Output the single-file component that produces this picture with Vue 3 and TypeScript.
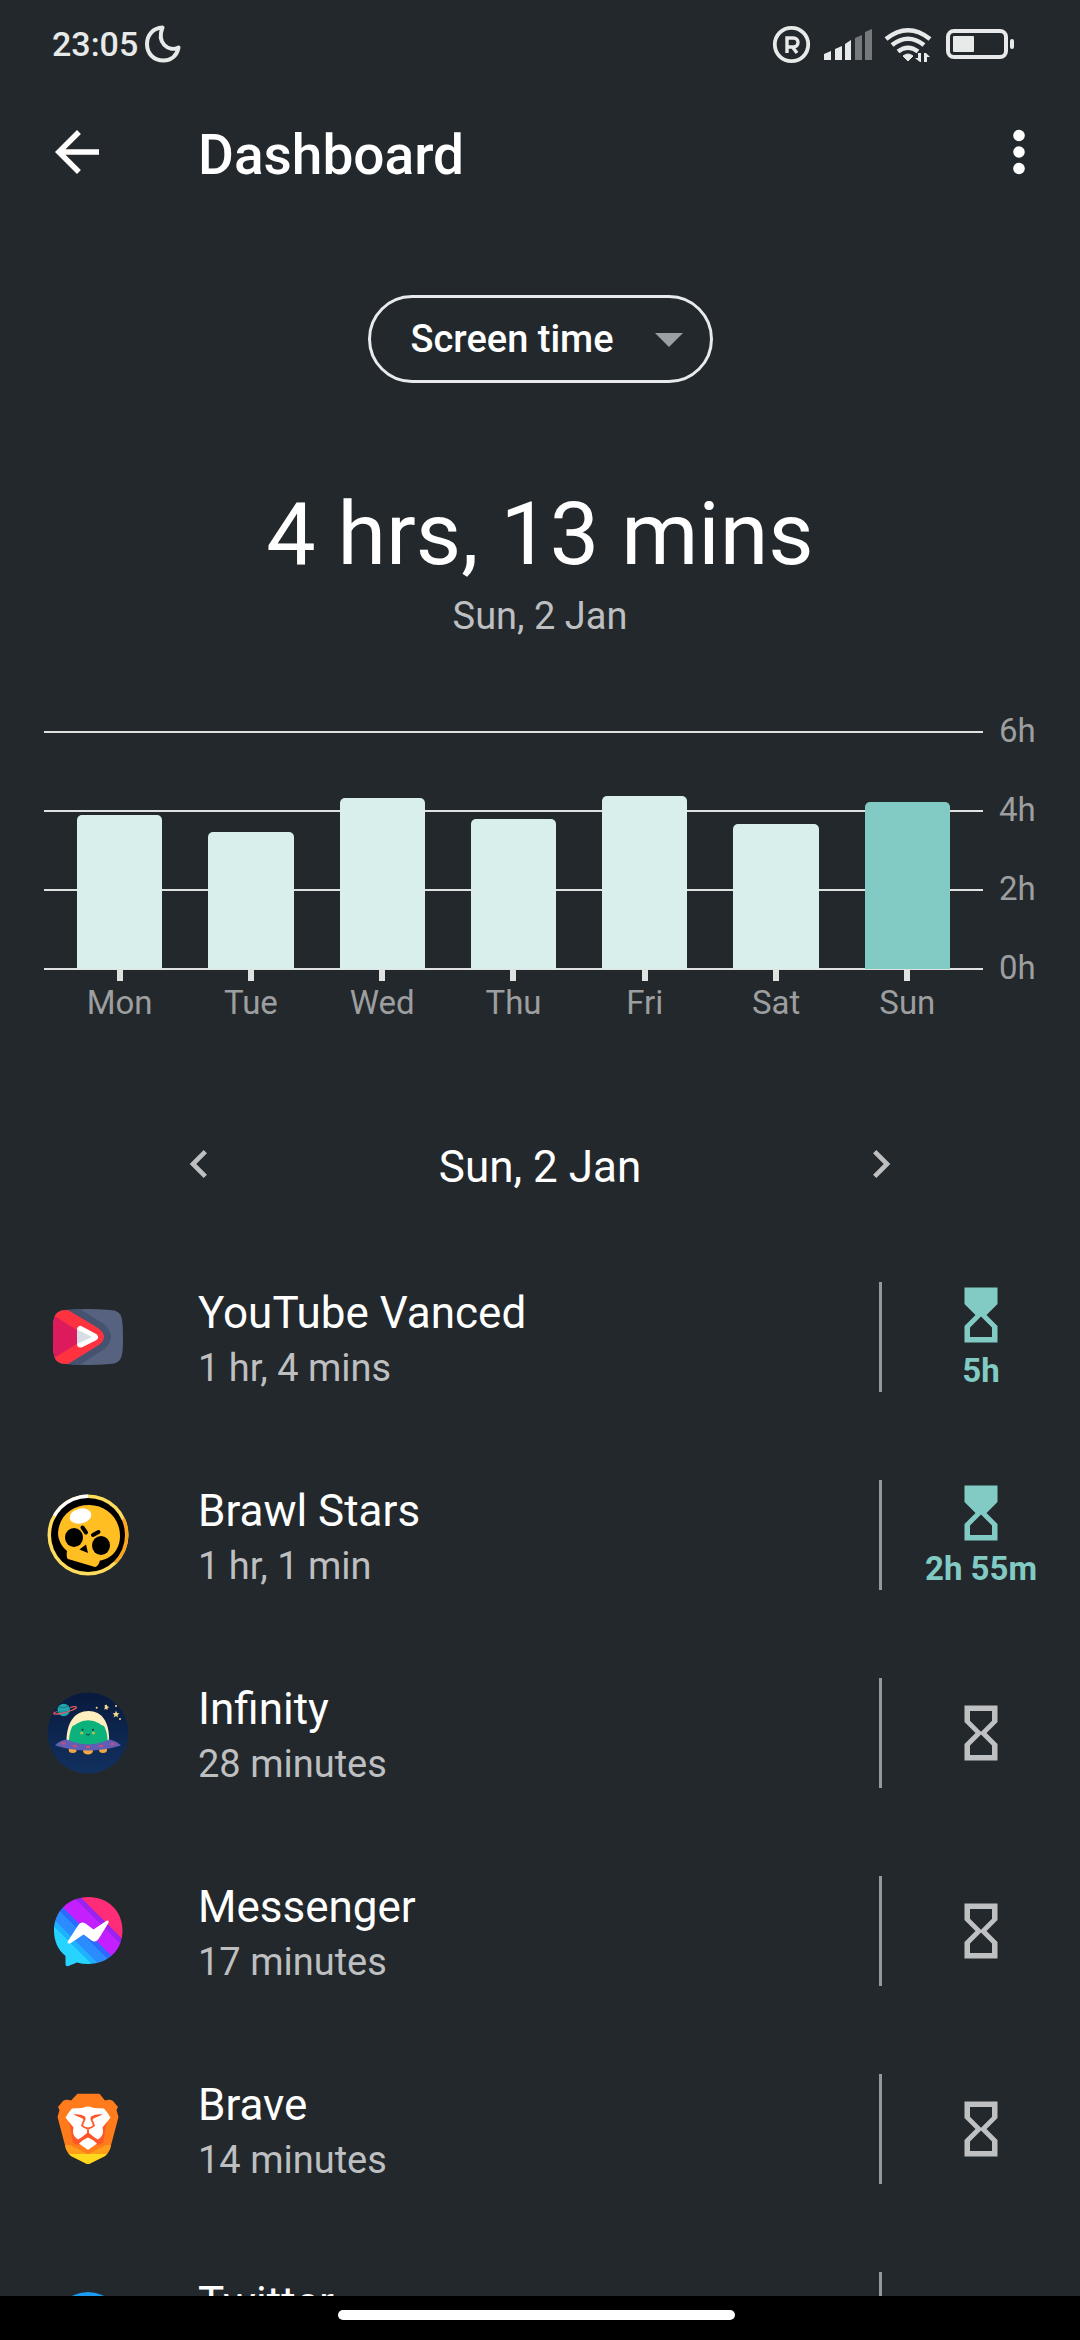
<script setup lang="ts">
import { ref } from 'vue'

interface Day {
  label: string
  hours: number
}

interface AppUsage {
  id: string
  name: string
  time: string
  limit?: string
}

const metric = ref('screen')

const days: Day[] = [
  { label: 'Mon', hours: 3.9 },
  { label: 'Tue', hours: 3.47 },
  { label: 'Wed', hours: 4.33 },
  { label: 'Thu', hours: 3.8 },
  { label: 'Fri', hours: 4.38 },
  { label: 'Sat', hours: 3.67 },
  { label: 'Sun', hours: 4.22 },
]
const selected = 'Sun'
const maxHours = 6
const scale = ['6h', '4h', '2h', '0h']

const apps: AppUsage[] = [
  { id: 'vanced', name: 'YouTube Vanced', time: '1 hr, 4 mins', limit: '5h' },
  { id: 'brawl', name: 'Brawl Stars', time: '1 hr, 1 min', limit: '2h 55m' },
  { id: 'infinity', name: 'Infinity', time: '28 minutes' },
  { id: 'messenger', name: 'Messenger', time: '17 minutes' },
  { id: 'brave', name: 'Brave', time: '14 minutes' },
  { id: 'twitter', name: 'Twitter', time: '' },
]
</script>

<template>
  <div class="screen">
    <div class="status">
      <span class="clock">23:05</span>
      <svg class="moon" width="36" height="38" viewBox="0 0 36 38" aria-hidden="true">
        <path d="M17.500 2.500C8 3 2 10 2 19c0 10 7 16.500 16.500 16.500C27 35.500 32 30 33.500 22.500C23 27.500 11.500 17.500 17.500 2.500Z" />
      </svg>
      <span class="spacer"></span>
      <svg width="244" height="40" viewBox="772 24 244 40" aria-hidden="true">
        <g fill="none" stroke="#e8eaea">
          <circle cx="791.5" cy="44.500" r="16.700" stroke-width="3.800" />
          <path d="M787 53V38h6.500a4 4 0 0 1 0 9H787M792.500 47l4.500 6" stroke-width="3.400" />
          <rect x="948" y="31" width="58" height="26" rx="6" stroke-width="4" />
        </g>
        <g fill="#e8eaea">
          <path d="M824 54l7-3v9h-7zM835 49l7-3v14h-7zM845 44l6-4v20h-6z" />
          <path d="M855 38l7-3v25h-7zM865 32l7-3v31h-7z" fill="#75797b" />
          <rect x="953" y="36" width="21" height="16" rx="1" />
          <rect x="1010" y="39" width="4" height="10" rx="2" />
          <path d="M903 56q5-4 10 0l-5 5z" stroke="#e8eaea" stroke-width="1" />
          <path d="M918 53h3v9h-1l-5-4h3zM924 62V53h2l4 4h-3v5z" />
        </g>
        <g fill="none" stroke="#e8eaea" stroke-width="4.500">
          <path d="M886 39q22-17.500 44 0" />
          <path d="M892 45q16-12.500 32 0" />
          <path d="M898 51.500q10-7.500 20 0" />
        </g>
      </svg>
    </div>

    <header class="bar">
      <button class="icon-button" aria-label="Back">
        <svg width="66" height="66" viewBox="0 0 24 24"><path d="M20 11H7.830l5.590-5.590L12 4l-8 8 8 8 1.410-1.410L7.830 13H20z" /></svg>
      </button>
      <h1>Dashboard</h1>
      <button class="icon-button" aria-label="More options">
        <svg width="66" height="66" viewBox="0 0 24 24">
          <circle cx="12" cy="6" r="2.100" /><circle cx="12" cy="12" r="2.100" /><circle cx="12" cy="18" r="2.100" />
        </svg>
      </button>
    </header>

    <main>
      <div class="picker">
        <select v-model="metric" aria-label="Metric">
          <option value="screen">Screen time</option>
          <option value="notifications">Notifications received</option>
          <option value="opened">Times opened</option>
        </select>
        <svg class="caret" width="28" height="14" viewBox="0 0 28 14" aria-hidden="true"><path d="M0 0h28L14 14z" /></svg>
      </div>

      <p class="total">4 hrs, 13 mins</p>
      <p class="total-date">Sun, 2 Jan</p>

      <section class="chart" aria-label="Daily screen time">
        <div class="plot">
          <div class="lines"><i v-for="s in scale" :key="s"></i></div>
          <div class="bars">
            <div v-for="d in days" :key="d.label" class="slot">
              <div class="column" :class="{ active: d.label === selected }" :style="{ height: (d.hours / maxHours) * 100 + '%' }"></div>
            </div>
          </div>
        </div>
        <div class="scale"><span v-for="s in scale" :key="s">{{ s }}</span></div>
        <div class="days"><span v-for="d in days" :key="d.label">{{ d.label }}</span></div>
      </section>

      <nav class="date-nav" aria-label="Day">
        <button aria-label="Previous day">
          <svg width="56" height="56" viewBox="0 0 24 24"><path d="M15.410 7.410L14 6l-6 6 6 6 1.410-1.410L10.830 12z" /></svg>
        </button>
        <h2>Sun, 2 Jan</h2>
        <button aria-label="Next day">
          <svg width="56" height="56" viewBox="0 0 24 24"><path d="M8.590 7.410L10 6l6 6-6 6-1.410-1.410L13.170 12z" /></svg>
        </button>
      </nav>

      <ul class="apps">
        <li v-for="app in apps" :key="app.id">
          <svg v-if="app.id === 'vanced'" class="logo" viewBox="0 0 84 84">
            <defs>
              <clipPath id="vanced-body"><path d="M7 42C7 21 8 16 20 15Q42 13 64 15C76 16 77 21 77 42S76 68 64 69Q42 71 20 69C8 68 7 63 7 42Z" /></clipPath>
            </defs>
            <g clip-path="url(#vanced-body)">
              <path d="M0 0h84v84H0z" fill="#56627f" />
              <path d="M0 0h16L33 13.500 58 29Q72 42 58 54.500L33 70 16 84H0z" fill="#455371" />
              <path d="M0 2L22 15 52 33Q64 42 52 50.500L22 69 0 82z" fill="#ff3340" />
              <path d="M0 15.500L42 42 0 68z" fill="#dd1b5c" />
            </g>
            <path d="M34.500 34.500v14.500L48.500 42z" fill="#fff" stroke="#fff" stroke-width="7" stroke-linejoin="round" />
            <path d="M31 34.500v14.500L46 42z" fill="#d8dce5" />
          </svg>

          <svg v-else-if="app.id === 'brawl'" class="logo" viewBox="0 0 84 84">
            <circle cx="42" cy="42" r="40.500" fill="#ffdc5c" />
            <path d="M78.500 24.500A40.500 40.500 0 0 1 70 71L67 67A36 36 0 0 0 75 28Z" fill="#f9a51f" />
            <path d="M42 1.500A40.500 40.500 0 0 0 7 22L42 42Z" fill="#fff" />
            <circle cx="42" cy="42" r="37" fill="#000" />
            <path d="M43 12C61 12 74 26 74 43C74 57 65 66 54 67.500Q52 74 49 74L22 66Q20 65 21 58C15 53 12 46 12 40C13 23 26 12 43 12Z" fill="#ffbf22" />
            <ellipse cx="34.500" cy="23" rx="11" ry="7.500" transform="rotate(-12 34.500 23)" fill="#fff" />
            <ellipse cx="28" cy="44.500" rx="9" ry="9.500" /><ellipse cx="55" cy="52.500" rx="9" ry="9.500" />
            <path d="M40 51.500l-6.500 5 8.500 3.500z" />
            <path d="M36.500 34.500l3.500 5M47 42l5.500-3" stroke="#000" stroke-width="4" stroke-linecap="round" />
          </svg>

          <svg v-else-if="app.id === 'infinity'" class="logo" viewBox="0 0 84 84">
            <defs><linearGradient id="night" x2="0" y2="1"><stop stop-color="#081a3d" /><stop offset="1" stop-color="#12315f" /></linearGradient></defs>
            <circle cx="42" cy="42" r="40.500" fill="url(#night)" />
            <circle cx="17.700" cy="19" r="6.200" fill="#20a5ad" />
            <path d="M13 16q5 2 9-1M13 21q5 1 10-1" stroke="#13798b" fill="none" />
            <path d="M11 20.500C5 23 8 24 15 22.500S30 18 30.500 16.500 27 15.500 24 16.500" fill="none" stroke="#dd5960" stroke-width="1.300" />
            <path d="M20.500 52C20 31 29 20 42.500 20S64 31 63 52z" fill="#ffefc0" />
            <path d="M23 52C23 43 25 38 26.500 35Q29 34 31 32.500Q42 26 53.500 32.500Q55 34 58 35C60 39 62 44 61.500 52Q42 57 23 52z" fill="#0bb27c" />
            <g fill="#f0a840"><ellipse cx="26.700" cy="59" rx="4" ry="3" /><ellipse cx="42" cy="60" rx="5" ry="3.500" /><ellipse cx="57" cy="59" rx="4" ry="3" /></g>
            <path d="M9 54.500Q14 49 21 48.500Q42 58 63 48.500Q71 50 75 54.500Q42 64.500 9 54.500z" fill="#605fb5" />
            <g fill="#cf4d70"><ellipse cx="17.500" cy="52.500" rx="2.200" ry="1.300" /><ellipse cx="29" cy="55" rx="2.200" ry="1.300" /><ellipse cx="42" cy="56" rx="2.200" ry="1.300" /><ellipse cx="55" cy="55" rx="2.200" ry="1.300" /><ellipse cx="66.500" cy="53" rx="2.200" ry="1.300" /></g>
            <g fill="#b7bb4e"><circle cx="35.700" cy="42" r="1.600" /><circle cx="47.500" cy="42" r="1.600" /></g>
            <g fill="#0a3b43"><circle cx="36.500" cy="38.700" r="1" /><circle cx="47" cy="38.700" r="1" /></g>
            <path d="M40 43q2 2.500 4 0" stroke="#0a3b43" fill="none" />
            <g fill="#f5d98f"><circle cx="50.700" cy="16.700" r="1" /><path d="M60.500 13.500l1 2 2 .500-2 1 0 2-1.500-1-2 .500 1-2-.500-2z" /><circle cx="70" cy="15" r="1" /><path d="M70 19.500l1 2.500 2.500.500-2 1.500.500 2.500-2-1.500-2.500 1.500 1-2.500-2-1.500 2.500-.500z" /><circle cx="74" cy="28" r="1" /></g>
          </svg>

          <svg v-else-if="app.id === 'messenger'" class="logo" viewBox="0 0 84 84">
            <defs>
              <linearGradient id="stripes" gradientUnits="userSpaceOnUse" x1="12" y1="72" x2="72" y2="12">
                <stop offset=".25" stop-color="#26d4ff" /><stop offset=".25" stop-color="#1fb0ff" />
                <stop offset=".31" stop-color="#1fb0ff" /><stop offset=".31" stop-color="#2a8cff" />
                <stop offset=".43" stop-color="#2a8cff" /><stop offset=".43" stop-color="#2b6cff" />
                <stop offset=".49" stop-color="#2b6cff" /><stop offset=".49" stop-color="#c31fff" />
                <stop offset=".66" stop-color="#c31fff" /><stop offset=".66" stop-color="#9c22ef" />
                <stop offset=".72" stop-color="#9c22ef" /><stop offset=".72" stop-color="#ff2c78" />
                <stop offset=".9" stop-color="#ff2c78" /><stop offset=".9" stop-color="#ff2e64" />
              </linearGradient>
            </defs>
            <path d="M42.500 8C62 8 76.500 22 76.500 41.500S62 75 42.500 75Q36 75 31 73.500L22.500 77Q19.500 78 19.500 75V67C12 61 8 52 8 41.500C8 22 23 8 42.500 8Z" fill="url(#stripes)" />
            <path d="M22 52L32 36.500Q35 31.500 39.500 34.500L47.500 40.500 60.500 31.800Q63.500 30.500 62.500 33.800L53.500 48.500Q50 54.500 45.500 51.500L37.500 45.500 24.500 54.300Q20.500 55.500 22 52Z" fill="#fff" />
          </svg>

          <svg v-else-if="app.id === 'brave'" class="logo" viewBox="0 0 84 84">
            <defs>
              <clipPath id="mane"><path d="M31.500 6.700H53.500L59 13.500Q64 12 67 14L72 20 70.500 23 72.500 30 64 62Q62.500 66 59 69L44 76.500Q42 77.500 40 76.500L25 69Q21.500 66 20 62L11.500 30 13.500 23 12 20 17 14Q20 12 25 13.500Z" /></clipPath>
            </defs>
            <g clip-path="url(#mane)">
              <path d="M0 0h84v84H0z" fill="#ff7b1c" />
              <path d="M0 58h84v10H0z" fill="#ff9e1a" />
              <path d="M0 67h84v17H0z" fill="#ffd91c" />
            </g>
            <path d="M27 54L42 58l15-4 3 4-18 9-18-9z" fill="#ff7b1c" />
            <path d="M23 34l4 22 5 2 10-8 10 8 5-2 4-22z" fill="#ff5528" />
            <path d="M26 21.500L36 21 42 19.300 48 21 58 21.500Q62 26 64.500 30.500L56.500 40.500Q58 46 55 50L52 52.500Q49 51 43 46h-2Q35 51 32 52.500L29 50Q26 46 27.500 40.500L19.500 30.500Q22 26 26 21.500Z" fill="#fff" />
            <path d="M27 27.500Q34 26.500 39 29.500L39.500 33.500 35.500 31ZM57 27.500Q50 26.500 45 29.500L44.500 33.500 48.500 31Z" fill="#ff5528" />
            <path d="M38.500 30.500L38 33.500 36 38.500Q38 41 42 41.500Q46 41 48 38.500L46 33.500 45.500 30.500M42 41.500V46" fill="none" stroke="#ff5528" stroke-width="1.800" />
            <path d="M42 50.500Q48 53 51 56.500L42 63l-9-6.500Q36 53 42 50.500Z" fill="#fff" />
          </svg>

          <svg v-else class="logo" viewBox="0 0 84 84"><circle cx="42" cy="42" r="35" fill="#1d9bf0" /></svg>

          <div class="info">
            <span class="name">{{ app.name }}</span>
            <span class="time">{{ app.time }}</span>
          </div>
          <button class="limit" :class="{ set: app.limit }" :aria-label="'App timer for ' + app.name">
            <svg width="66" height="66" viewBox="0 0 24 24">
              <path v-if="app.limit" d="M6 2v6l4 4-4 4v6h12v-6l-4-4 4-4V2zM16 16.500V20H8v-3.500l4-4z" fill-rule="evenodd" />
              <path v-else d="M6 2v6l4 4-4 4v6h12v-6l-4-4 4-4V2zM16 16.500V20H8v-3.500l4-4zM12 11.500l-4-4V4h8v3.500z" fill-rule="evenodd" />
            </svg>
            <span v-if="app.limit">{{ app.limit }}</span>
          </button>
        </li>
      </ul>
    </main>

    <div class="gesture"><span></span></div>
  </div>
</template>

<style>
body {
  margin: 0;
  background: #23282c;
}
</style>

<style scoped>
.screen {
  display: flex;
  flex-direction: column;
  height: 100vh;
  overflow: hidden;
  background: #23282c;
  color: #fff;
  font-family: Roboto, sans-serif;
}
h1, h2, p, ul {
  margin: 0;
  padding: 0;
  font-weight: 400;
}
button {
  padding: 0;
  border: 0;
  background: none;
  color: inherit;
  font-family: inherit;
}
svg {
  display: block;
  flex: none;
}
button svg {
  fill: currentColor;
}
.status {
  display: flex;
  flex: none;
  align-items: center;
  height: 88px;
  padding: 0 64px 0 52px;
  color: #e8eaea;
}
.clock {
  font-size: 34px;
  font-weight: 500;
  line-height: 40px;
}
.moon {
  margin-left: 7px;
  fill: none;
  stroke: #e8eaea;
  stroke-width: 4;
  stroke-linejoin: round;
}
.spacer {
  flex: 1;
}
.bar {
  display: flex;
  flex: none;
  align-items: center;
  height: 128px;
  padding: 0 28px 0 44px;
}
.bar h1 {
  flex: 1;
  padding: 6px 0 0 88px;
  font-size: 55px;
  font-weight: 500;
  line-height: 64px;
}
main {
  flex: 1;
  min-height: 0;
  overflow: hidden;
}
.picker {
  position: relative;
  width: 345px;
  margin: 79px auto 0;
}
.picker select {
  display: block;
  box-sizing: border-box;
  width: 100%;
  height: 88px;
  padding: 0 80px 0 40px;
  border: 3px solid #e8eaed;
  border-radius: 44px;
  appearance: none;
  background: none;
  color: inherit;
  font-family: inherit;
  font-size: 38px;
  font-weight: 500;
}
.caret {
  position: absolute;
  top: 38px;
  right: 30px;
  fill: #9aa0a6;
  pointer-events: none;
}
.total {
  margin-top: 99px;
  font-size: 88px;
  line-height: 104px;
  text-align: center;
}
.total-date {
  margin-top: 2px;
  color: #bdbfc0;
  font-size: 38px;
  line-height: 56px;
  text-align: center;
}
.chart {
  display: grid;
  grid-template-columns: 1fr 53px;
  padding: 87px 44px 0;
  color: #9c9e9f;
  font-size: 33px;
  line-height: 40px;
}
.plot {
  position: relative;
  height: 239px;
}
.lines {
  position: absolute;
  inset: 0;
  display: flex;
  flex-direction: column;
  justify-content: space-between;
}
.lines i {
  height: 2px;
  background: #e0e2e1;
}
.bars {
  position: relative;
  display: flex;
  box-sizing: border-box;
  height: 100%;
  padding: 1px 10px;
}
.slot {
  display: flex;
  flex: 1;
  align-items: flex-end;
  justify-content: center;
}
.column {
  width: 65%;
  border-radius: 5px 5px 0 0;
  background: #d9efec;
}
.column.active {
  background: #81cbc4;
}
.scale {
  display: flex;
  flex-direction: column;
  justify-content: space-between;
  margin: -20px 0 -18px;
  padding-left: 16px;
}
.days {
  display: flex;
  padding: 0 10px;
}
.days span {
  flex: 1;
  text-align: center;
}
.days span::before {
  display: block;
  width: 6px;
  height: 11px;
  margin: 0 auto 2px;
  background: #e0e2e1;
  content: '';
}
.date-nav {
  display: flex;
  align-items: center;
  justify-content: space-between;
  height: 82px;
  margin: 100px 171px 33px;
}
.date-nav button {
  color: #bdbfc0;
}
.date-nav h2 {
  padding-top: 6px;
  font-size: 44px;
  line-height: 56px;
}
.apps {
  list-style: none;
}
.apps li {
  display: flex;
  align-items: center;
  height: 198px;
  padding-left: 46px;
}
.logo {
  width: 84px;
  height: 84px;
}
.info {
  display: flex;
  flex: 1;
  flex-direction: column;
  padding: 6px 0 0 68px;
}
.name {
  font-size: 44px;
  line-height: 56px;
}
.time {
  min-height: 54px;
  color: #bdbfc0;
  font-size: 38px;
  line-height: 54px;
}
.limit {
  display: flex;
  flex-direction: column;
  align-items: center;
  justify-content: center;
  box-sizing: border-box;
  width: 201px;
  height: 110px;
  border-left: 3px solid #94999b;
  border-radius: 0;
  color: #bfc0c2;
  font-size: 33px;
  font-weight: 700;
  line-height: 46px;
}
.limit.set {
  padding-top: 2px;
  color: #81cbc4;
}
.gesture {
  display: flex;
  flex: none;
  justify-content: center;
  height: 44px;
  padding-right: 7px;
  background: #000;
}
.gesture span {
  width: 37%;
  height: 10px;
  margin-top: 14px;
  border-radius: 5px;
  background: #fff;
}
</style>
